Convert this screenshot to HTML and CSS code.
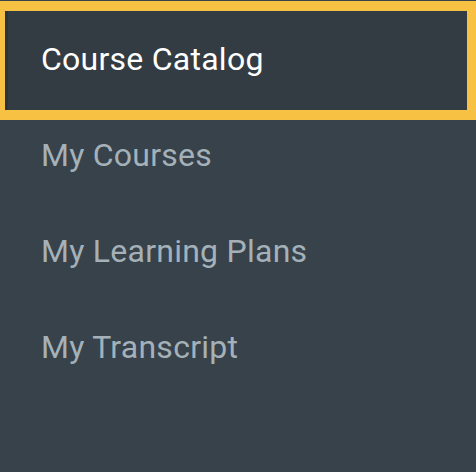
FILE: index.html
```html
<!DOCTYPE html>
<html lang="en">
<head>
<meta charset="utf-8">
<link rel="stylesheet" href="styles.css">
</head>
<body>
<nav class="menu">
  <a class="item active" href="#">Course Catalog</a>
  <a class="item" href="#">My Courses</a>
  <a class="item" href="#">My Learning Plans</a>
  <a class="item" href="#">My Transcript</a>
</nav>
</body>
</html>
```
FILE: styles.css
```css
html, body {
  margin: 0;
  padding: 0;
  background: #37424a;
}
body {
  width: 476px;
  height: 472px;
  overflow: hidden;
  font-family: Roboto, "Noto Sans", sans-serif;
}
.menu {
  display: flex;
  flex-direction: column;
  padding-top: 11px;
}
.item {
  display: block;
  margin-left: 5px;
  padding-left: 36px;
  height: 96px;
  line-height: 90px;
  font-size: 32px;
  font-weight: 400;
  letter-spacing: 0.25px;
  color: #a5b1b9;
  text-decoration: none;
  box-sizing: border-box;
}
.item.active {
  height: 99px;
  line-height: 96px;
  margin-right: 9px;
  padding-left: 33px;
  color: #ffffff;
  background: #323c42;
  border-left: 3px solid #2b3439;
  outline: 10px solid #f7c244;
}
```
